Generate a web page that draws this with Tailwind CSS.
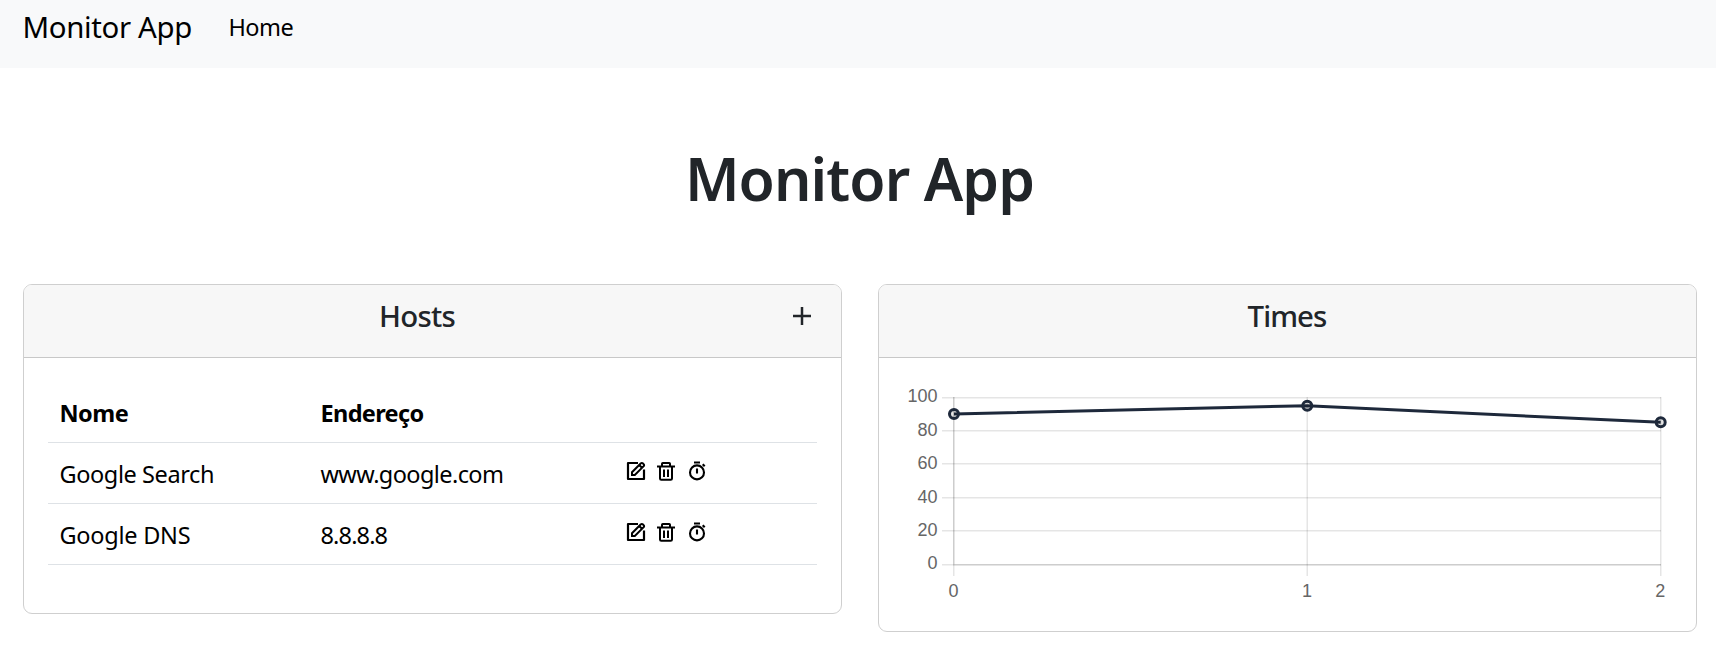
<!DOCTYPE html>
<html lang="pt-BR">
<head>
<meta charset="utf-8">
<title>Monitor App</title>
<script src="https://cdn.jsdelivr.net/npm/@tailwindcss/browser@4"></script>
</head>
<body class="bg-white font-['Noto_Sans',sans-serif] text-black">
<svg class="hidden">
  <symbol id="edit" viewBox="0 0 20 20"><g fill="none" stroke="#000" stroke-width="2.200"><path d="M12 2H2v16h16V8.500" stroke-linejoin="round"/><path d="M6 14v-2.800l8.900-8.900a1.300 1.300 0 0 1 1.900 0l.9.900a1.300 1.300 0 0 1 0 1.900L8.800 14ZM13.200 4l2.800 2.800" stroke-width="2"/></g></symbol>
  <symbol id="trash" viewBox="0 0 20 20"><path d="M1 5.500h18M6 5.500V2.800Q6 2 6.800 2h6.400Q14 2 14 2.800V5.500M4 5.500v12q0 1.300 1.300 1.300h9.400q1.300 0 1.300-1.300v-12M8 8.500v7.500M12 8.500v7.500" fill="none" stroke="#000" stroke-width="2"/></symbol>
  <symbol id="timer" viewBox="0 0 20 20"><g fill="none" stroke="#000" stroke-width="2.100"><circle cx="9" cy="11.400" r="7"/><path d="M6 1.500h6M9 7.500v5M14.700 3.300l2 2"/></g></symbol>
</svg>
<nav class="flex h-[68px] items-start bg-[#f8f9fa] pl-[22.5px]">
  <a class="pt-[5px] text-[29.4px] leading-[45px] tracking-[-0.35px]">Monitor App</a>
  <a class="ml-[36.5px] pt-[9px] text-[23.5px] leading-[36px] tracking-[-0.5px]">Home</a>
</nav>
<h1 class="mt-[74px] mb-[70px] pl-[3px] text-center text-[58.8px] leading-[72px] font-semibold tracking-[-0.9px] text-[#212529]">Monitor App</h1>
<main class="flex items-start gap-[36px] pl-[23px] pr-[19px]">
  <section class="h-[330px] w-[819px] overflow-hidden rounded-[9px] border border-[#cfcfcf]">
    <header class="relative h-[73px] border-b border-[#c8c8c8] bg-[#f7f7f7] pt-[13px] text-center">
      <h2 class="mr-[31px] text-[29.4px] leading-[36px] font-medium tracking-[-0.75px] text-[#212529]">Hosts</h2>
      <svg class="absolute right-[29px] top-[21px] size-[20px]" viewBox="0 0 20 20"><path d="M1 10h18M10 1v18" stroke="#212529" stroke-width="2.500"/></svg>
    </header>
    <div class="px-6 pt-6">
      <div class="grid h-[61px] grid-cols-[261px_305px_1fr] border-b border-[#dee2e6] pl-[11.5px] pt-[13px] text-[23.5px] leading-[36px] font-bold"><div class="tracking-[-0.5px]">Nome</div><div class="tracking-[-0.65px]">Endereço</div></div>
      <div class="grid h-[61px] grid-cols-[261px_305.5px_1fr] border-b border-[#dee2e6] pl-[11.5px] pt-[13px] text-[23.5px] leading-[36px]">
        <div class="tracking-[-0.4px]">Google Search</div><div class="tracking-[-0.6px]">www.google.com</div>
        <div class="flex pt-[5px]"><svg class="size-[20px]"><use href="#edit"/></svg><svg class="ml-[10px] size-[20px]"><use href="#trash"/></svg><svg class="ml-[12px] size-[20px]"><use href="#timer"/></svg></div>
      </div>
      <div class="grid h-[61px] grid-cols-[261px_305.5px_1fr] border-b border-[#dee2e6] pl-[11.5px] pt-[13px] text-[23.5px] leading-[36px]">
        <div class="tracking-[-0.25px]">Google DNS</div><div class="tracking-[-0.85px]">8.8.8.8</div>
        <div class="flex pt-[5px]"><svg class="size-[20px]"><use href="#edit"/></svg><svg class="ml-[10px] size-[20px]"><use href="#trash"/></svg><svg class="ml-[12px] size-[20px]"><use href="#timer"/></svg></div>
      </div>
    </div>
  </section>
  <section class="h-[348px] w-[819px] overflow-hidden rounded-[9px] border border-[#cfcfcf]">
    <header class="h-[73px] border-b border-[#c8c8c8] bg-[#f7f7f7] pt-[13px] text-center">
      <h2 class="mr-[1px] text-[29.4px] leading-[36px] font-medium tracking-[-0.9px] text-[#212529]">Times</h2>
    </header>
    <svg class="block h-[273px] w-[817px] font-['Liberation_Sans',sans-serif] text-[18px]" viewBox="879 358 817 273">
      <g fill="none" stroke="#000" stroke-opacity=".1" stroke-width="1.500">
        <path d="M942 397.750h719M942 430.750h719M942 463.750h719M942 497.750h719M942 530.750h719M942 564.750h719"/>
        <path d="M953.750 397v179M1307.250 397v179M1660.750 397v179"/>
        <path d="M953.750 397v168M953 564.750h708"/>
      </g>
      <path d="M954 414L1307.250 405.700L1660.700 422.300" fill="none" stroke="#1e293b" stroke-width="3"/>
      <g fill="#000" fill-opacity=".1" stroke="#1e293b" stroke-width="3"><circle cx="954" cy="414" r="4.500"/><circle cx="1307.250" cy="405.700" r="4.500"/><circle cx="1660.700" cy="422.300" r="4.500"/></g>
      <g fill="#666" text-anchor="end"><text x="937.500" y="402">100</text><text x="937.500" y="436">80</text><text x="937.500" y="469">60</text><text x="937.500" y="503">40</text><text x="937.500" y="536">20</text><text x="937.500" y="569">0</text></g>
      <g fill="#666" text-anchor="middle"><text x="953.500" y="597">0</text><text x="1307" y="597">1</text><text x="1660.300" y="597">2</text></g>
    </svg>
  </section>
</main>
</body>
</html>
